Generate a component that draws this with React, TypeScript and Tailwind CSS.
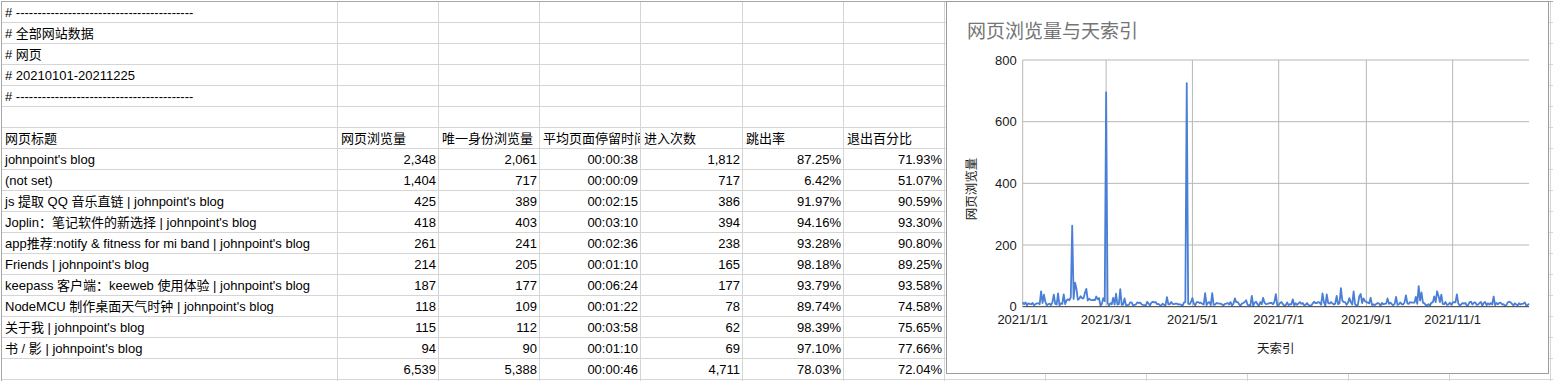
const FONT = "font-['Liberation_Sans','Noto_Sans_CJK_SC',sans-serif]"
const SVG_FONT = "'Liberation Sans', 'Noto Sans CJK SC', sans-serif"

// column widths incl. right border
const COLS = [336, 101, 101, 101, 102, 101, 101, 101, 101, 101, 101, 101, 101, 101]
const DASH = '# ' + '-'.repeat(41)

type Row = { cells: string[]; num?: boolean }

const rows: Row[] = [
  { cells: [DASH] },
  { cells: ['# 全部网站数据'] },
  { cells: ['# 网页'] },
  { cells: ['# 20210101-20211225'] },
  { cells: [DASH] },
  { cells: [] },
  { cells: ['网页标题', '网页浏览量', '唯一身份浏览量', '平均页面停留时间', '进入次数', '跳出率', '退出百分比'] },
  { num: true, cells: ["johnpoint's blog", '2,348', '2,061', '00:00:38', '1,812', '87.25%', '71.93%'] },
  { num: true, cells: ['(not set)', '1,404', '717', '00:00:09', '717', '6.42%', '51.07%'] },
  { num: true, cells: ["js 提取 QQ 音乐直链 | johnpoint's blog", '425', '389', '00:02:15', '386', '91.97%', '90.59%'] },
  { num: true, cells: ["Joplin：笔记软件的新选择 | johnpoint's blog", '418', '403', '00:03:10', '394', '94.16%', '93.30%'] },
  { num: true, cells: ["app推荐:notify & fitness for mi band | johnpoint's blog", '261', '241', '00:02:36', '238', '93.28%', '90.80%'] },
  { num: true, cells: ["Friends | johnpoint's blog", '214', '205', '00:01:10', '165', '98.18%', '89.25%'] },
  { num: true, cells: ["keepass 客户端：keeweb 使用体验 | johnpoint's blog", '187', '177', '00:06:24', '177', '93.79%', '93.58%'] },
  { num: true, cells: ["NodeMCU 制作桌面天气时钟 | johnpoint's blog", '118', '109', '00:01:22', '78', '89.74%', '74.58%'] },
  { num: true, cells: ["关于我 | johnpoint's blog", '115', '112', '00:03:58', '62', '98.39%', '75.65%'] },
  { num: true, cells: ["书 / 影 | johnpoint's blog", '94', '90', '00:01:10', '69', '97.10%', '77.66%'] },
  { num: true, cells: ['', '6,539', '5,388', '00:00:46', '4,711', '78.03%', '72.04%'] },
  { cells: [] },
]

function rng(seed: number) {
  let a = seed
  return () => {
    a |= 0
    a = (a + 0x6d2b79f5) | 0
    let t = Math.imul(a ^ (a >>> 15), 1 | a)
    t = (t + Math.imul(t ^ (t >>> 7), 61 | t)) ^ t
    return ((t ^ (t >>> 14)) >>> 0) / 4294967296
  }
}

const DAYS = 359
const views: number[] = (() => {
  const r = rng(11)
  const v: number[] = []
  for (let i = 0; i < DAYS; i++) {
    let x = 3 + r() * 13
    if (r() < 0.09) x += 12 + r() * 28
    if (i > 30 && i < 55) x += 8 + r() * 15
    v.push(Math.round(x))
  }
  const spikes: Record<number, number> = {
    0: 14, 1: 8, 13: 50, 14: 12, 34: 30, 35: 263, 36: 25, 37: 78, 38: 58, 39: 22,
    44: 45, 45: 58, 46: 20, 58: 18, 59: 695, 60: 12, 66: 42, 69: 57, 115: 15, 116: 725,
    117: 10, 225: 60, 226: 20, 234: 50, 280: 67, 281: 20, 293: 50, 307: 40,
  }
  Object.entries(spikes).forEach(([k, val]) => { v[Number(k)] = val })
  return v
})()

// chart geometry (relative to chart inner box)
const PL = 75.7
const PR = 582
const Y0 = 304.7
const Y800 = 58
const pxDay = (PR - PL) / (DAYS - 1)
const yOf = (v: number) => Y0 - (v * (Y0 - Y800)) / 800
const xOf = (d: number) => PL + d * pxDay

const months = [
  { d: 0, label: '2021/1/1' },
  { d: 59, label: '2021/3/1' },
  { d: 120, label: '2021/5/1' },
  { d: 181, label: '2021/7/1' },
  { d: 243, label: '2021/9/1' },
  { d: 304, label: '2021/11/1' },
]

function Chart() {
  const points = views.map((v, i) => `${xOf(i).toFixed(2)},${yOf(v).toFixed(2)}`).join(' ')
  return (
    <div className="absolute left-[946px] top-[1px] w-[603px] h-[373px] bg-white border border-[#9c9c9c]">
      <svg width="601" height="371" className="block" style={{ fontFamily: SVG_FONT }}>
        <text x="20" y="36" fontSize="19" fill="#757575">网页浏览量与天索引</text>

        {[0, 200, 400, 600, 800].map((v) => (
          <g key={v}>
            {v > 0 && <line x1={PL} x2={PR} y1={yOf(v)} y2={yOf(v)} stroke="#b7b7b7" strokeWidth="1" />}
            <text x="69.7" y={yOf(v)} fontSize="13" fill="#1a1a1a" textAnchor="end" dominantBaseline="central">{v}</text>
          </g>
        ))}

        {months.map((m) => (
          <g key={m.label}>
            <line x1={xOf(m.d)} x2={xOf(m.d)} y1={Y800} y2={Y0} stroke="#b7b7b7" strokeWidth="1" />
            <text x={xOf(m.d)} y="317" fontSize="13" fill="#1a1a1a" textAnchor="middle" dominantBaseline="central">{m.label}</text>
          </g>
        ))}

        <polyline points={points} fill="none" stroke="#4a7fd6" strokeWidth="1.8" strokeLinejoin="round" />
        <line x1={PL} x2={PR} y1={Y0} y2={Y0} stroke="#333" strokeWidth="1" />

        <text x="328.7" y="347" fontSize="12.5" fill="#1a1a1a" textAnchor="middle" dominantBaseline="central">天索引</text>
        <text
          x="0"
          y="0"
          fontSize="12.5"
          fill="#1a1a1a"
          textAnchor="middle"
          dominantBaseline="central"
          transform="translate(24.7 187) rotate(-90)"
        >
          网页浏览量
        </text>
      </svg>
    </div>
  )
}

export default function App() {
  return (
    <div className={`relative w-[1553px] h-[381px] overflow-hidden bg-white text-[13px] text-black ${FONT}`}>
      <div className="ml-px mt-px border-t border-l border-[#a8a8a8] w-max">
        {rows.map((row, ri) => (
          <div key={ri} className="flex h-[21px] border-b border-[#d5d5d5]">
            {COLS.map((w, ci) => {
              const text = row.cells[ci] ?? ''
              const right = row.num && ci > 0
              return (
                <div
                  key={ci}
                  style={{ width: w }}
                  className={`shrink-0 h-full border-r border-[#d5d5d5] flex items-center overflow-hidden whitespace-nowrap leading-none ${
                    right ? 'justify-end pr-[2px]' : 'pl-[3px]'
                  }`}
                >
                  {text}
                </div>
              )
            })}
          </div>
        ))}
      </div>
      <Chart />
    </div>
  )
}
